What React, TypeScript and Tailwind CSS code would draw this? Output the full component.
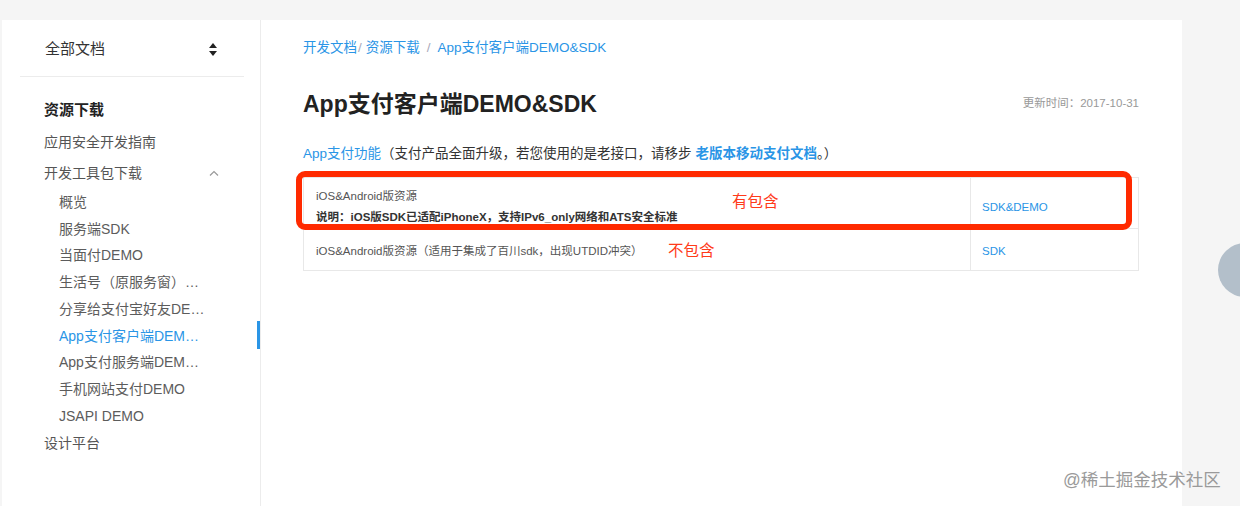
import React from "react";

const FONT = { fontFamily: '"Liberation Sans", "Noto Sans CJK SC", sans-serif' };

const subItems = [
  "概览",
  "服务端SDK",
  "当面付DEMO",
  "生活号（原服务窗）…",
  "分享给支付宝好友DE…",
  "App支付客户端DEM…",
  "App支付服务端DEM…",
  "手机网站支付DEMO",
  "JSAPI DEMO",
];

export default function App() {
  return (
    <div className="relative h-[506px] w-[1240px] overflow-hidden bg-[#f5f5f5] pl-[2px] pt-[20px]" style={FONT}>
      <div className="flex h-[486px] w-[1180px] bg-white">
        {/* Sidebar */}
        <aside className="relative w-[259px] shrink-0 border-r border-[#ececec] pl-[18px] pr-[16px]">
          <div className="flex h-[57px] items-center justify-between border-b border-[#ececec] pl-[25px] pr-[27px] pt-[2px]">
            <span className="text-[15px] text-[#333]">全部文档</span>
            <svg width="8" height="13" viewBox="0 0 8 13">
              <path d="M4 0 L8 5 L0 5 Z" fill="#222" />
              <path d="M4 13 L8 8 L0 8 Z" fill="#222" />
            </svg>
          </div>
          <div className="mt-[17px] pl-[24px]">
            <div className="flex h-[34px] items-start pt-[1px] text-[15px] font-bold leading-[30px] text-[#222]">资源下载</div>
            <div className="flex h-[29px] items-center text-[14px] text-[#555]">应用安全开发指南</div>
            <div className="flex h-[32px] items-center justify-between pr-[25px] text-[14px] text-[#555]">
              <span>开发工具包下载</span>
              <svg width="10" height="6" viewBox="0 0 10 6">
                <path d="M1 5.5 L5 1.5 L9 5.5" stroke="#999" strokeWidth="1.2" fill="none" />
              </svg>
            </div>
            {subItems.map((t, i) => (
              <div
                key={t}
                className={`flex h-[26.75px] items-center pl-[15px] text-[14px] ${i === 5 ? "text-[#2a95e6]" : "text-[#5c5c5c]"}`}
              >
                {t}
              </div>
            ))}
            <div className="flex h-[27px] items-center text-[14px] text-[#555]">设计平台</div>
          </div>
          <div className="absolute right-[0px] top-[301px] h-[28px] w-[3px] bg-[#2a95e6]" />
        </aside>

        {/* Content */}
        <main className="flex-1 pl-[42px] pr-[43px] pt-[18px]">
          <div className="flex h-[20px] items-center text-[13.5px] text-[#2a95e6]">
            <span>开发文档</span>
            <span className="ml-[1px] mr-[4px] text-[#aab]">/</span>
            <span>资源下载</span>
            <span className="mx-[7px] text-[#aab]">/</span>
            <span>App支付客户端DEMO&amp;SDK</span>
          </div>
          <div className="mt-[31px] flex h-[30px] items-center justify-between">
            <h1 className="text-[23px] font-bold text-[#222]">App支付客户端DEMO&amp;SDK</h1>
            <span className="text-[11.5px] text-[#999]">更新时间：2017-10-31</span>
          </div>
          <div className="mt-[25px] flex h-[20px] items-center whitespace-pre text-[13.5px] text-[#333]">
            <span className="text-[#2a95e6]">App支付功能</span>
            <span>（支付产品全面升级，若您使用的是老接口，请移步</span>
            <span className="w-[4px]" />
            <span className="font-bold text-[#2a95e6]">老版本移动支付文档</span>
            <span>。）</span>
          </div>

          <div className="relative mt-[13px]">
            <div className="border border-[#e8e8e8]">
              <div className="flex h-[51px] border-b border-[#e8e8e8]">
                <div className="flex flex-1 flex-col justify-center gap-[5px] border-r border-[#e8e8e8] pl-[12px] pt-[6px]">
                  <div className="text-[11.5px] leading-[16px] text-[#555]">iOS&amp;Android版资源</div>
                  <div className="text-[11.5px] font-bold leading-[16px] text-[#333]">说明：iOS版SDK已适配iPhoneX，支持IPv6_only网络和ATS安全标准</div>
                </div>
                <div className="flex w-[167px] items-center pl-[11px] pt-[9px] text-[11.5px] text-[#2a95e6]">SDK&amp;DEMO</div>
              </div>
              <div className="flex h-[41px]">
                <div className="flex flex-1 items-center border-r border-[#e8e8e8] pl-[12px] pt-[5px] text-[11.5px] text-[#555]">
                  iOS&amp;Android版资源（适用于集成了百川sdk，出现UTDID冲突）
                </div>
                <div className="flex w-[167px] items-center pl-[11px] pt-[5px] text-[11.5px] text-[#2a95e6]">SDK</div>
              </div>
            </div>
            <div className="pointer-events-none absolute left-[-7px] top-[-6px] h-[59px] w-[836px] rounded-[9px] border-[6px] border-[#ff2a00]" />
            <span className="absolute left-[429px] top-[14px] text-[15.5px] leading-[22px] text-[#ff3b1a]">有包含</span>
            <span className="absolute left-[365px] top-[63px] text-[15.5px] leading-[22px] text-[#ff3b1a]">不包含</span>
          </div>
        </main>
      </div>

      <div className="absolute left-[1218px] top-[243px] h-[54px] w-[54px] rounded-full bg-[#b3bfca]" />
      <div className="absolute left-[1063px] top-[469px] text-[17.5px] leading-[22px] text-[#9a9a9a]">@稀土掘金技术社区</div>
    </div>
  );
}
